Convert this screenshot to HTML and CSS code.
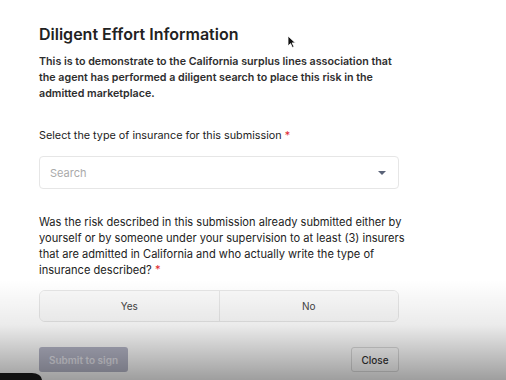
FILE: index.html
```html
<!DOCTYPE html>
<html lang="en">
<head>
    <meta charset="UTF-8">
    <meta name="viewport" content="width=device-width, initial-scale=1.0">
    <title>Diligent Effort Information</title>
    <link rel="stylesheet" href="styles.css">
</head>
<body>
    <div class="modal">
        <h1>Diligent Effort Information</h1>
        <p class="intro">This is to demonstrate to the California surplus lines association that the agent has performed a diligent search to place this risk in the admitted marketplace.</p>

        <div class="field">
            <label class="label">Select the type of insurance for this submission <span class="req">*</span></label>
            <div class="select">
                <span class="placeholder">Search</span>
                <span class="caret"></span>
            </div>
        </div>

        <div class="field question">
            <label class="label">Was the risk described in this submission already submitted either by<br>yourself or by someone under your supervision to at least (3) insurers<br>that are admitted in California and who actually write the type of<br>insurance described? <span class="req">*</span></label>
            <div class="toggle">
                <button class="toggle-btn">Yes</button>
                <button class="toggle-btn">No</button>
            </div>
        </div>

        <div class="actions">
            <button class="btn-submit" disabled>Submit to sign</button>
            <button class="btn-close">Close</button>
        </div>
    </div>

    <svg class="cursor" width="10" height="14" viewBox="0 0 10 14">
        <path d="M1 1 L1 11 L3.5 8.6 L5.4 12.6 L7 11.8 L5.1 7.9 L8.4 7.9 Z" fill="#111" stroke="#fff" stroke-width="0.8"/>
    </svg>
    <div class="shade"></div>
    <div class="corner"></div>
</body>
</html>
```

FILE: styles.css
```css
* {
    margin: 0;
    padding: 0;
    box-sizing: border-box;
}

body {
    font-family: Inter, 'Noto Sans', sans-serif;
    background: #fff;
    color: #222;
    width: 506px;
    height: 380px;
    overflow: hidden;
}

.modal {
    width: 399px;
    padding: 22px 0 0 39px;
}

h1 {
    font-size: 16px;
    font-weight: 600;
    color: #222;
    line-height: 24px;
    margin-bottom: 8px;
}

.intro {
    font-size: 10.7px;
    font-weight: 600;
    line-height: 16px;
    color: #2e2e2e;
    margin-bottom: 26px;
}

.field {
    margin-bottom: 25px;
}

.label {
    display: block;
    font-size: 10.8px;
    font-weight: 400;
    line-height: 16px;
    color: #222;
    margin-bottom: 12px;
}

.question .label {
    font-size: 11.1px;
    white-space: nowrap;
}

.req {
    color: #e0282e;
}

.select {
    height: 33px;
    border: 1px solid #e6e6e6;
    border-radius: 4px;
    display: flex;
    align-items: center;
    justify-content: space-between;
    padding: 0 12px 0 10px;
}

.placeholder {
    font-size: 11px;
    color: #aaa;
}

.caret {
    width: 0;
    height: 0;
    border-left: 4px solid transparent;
    border-right: 4px solid transparent;
    border-top: 4px solid #5a6378;
}

.toggle {
    display: flex;
    height: 32px;
    border: 1px solid #e6e6e6;
    border-radius: 6px;
    overflow: hidden;
}

.toggle-btn {
    flex: 1;
    background: #fafafa;
    border: none;
    font-family: inherit;
    font-size: 10px;
    color: #444;
}

.toggle-btn + .toggle-btn {
    border-left: 1px solid #e6e6e6;
}

.actions {
    display: flex;
    justify-content: space-between;
    margin-top: 1px;
}

.btn-submit {
    width: 89px;
    height: 25px;
    border: none;
    border-radius: 3px;
    background: #b6b7c8;
    color: #e6e6ee;
    font-family: inherit;
    font-size: 10px;
    font-weight: 600;
}

.btn-close {
    width: 48px;
    height: 25px;
    border: 1px solid #dcdcdc;
    border-radius: 3px;
    background: #fff;
    color: #333;
    font-family: inherit;
    font-size: 10px;
    font-weight: 500;
}

.cursor {
    position: absolute;
    left: 287px;
    top: 35px;
}

.shade {
    position: absolute;
    left: 0;
    right: 0;
    bottom: 0;
    height: 100px;
    background: linear-gradient(to bottom, rgba(0, 0, 0, 0), rgba(0, 0, 0, 0.08) 45%, rgba(0, 0, 0, 0.38));
    pointer-events: none;
}

.corner {
    position: absolute;
    left: 0;
    bottom: 0;
    width: 42px;
    height: 7px;
    background: #111;
    border-top-right-radius: 10px 7px;
}
```
